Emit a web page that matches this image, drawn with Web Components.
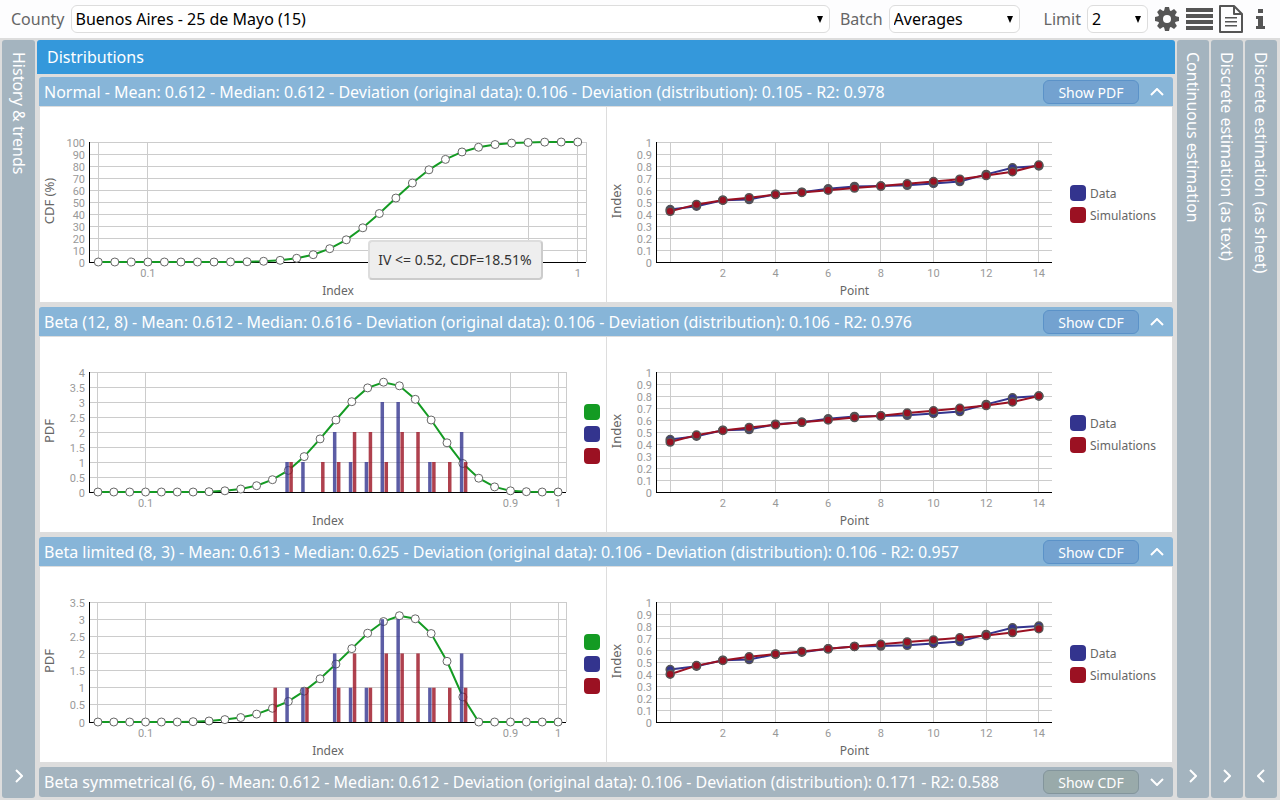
<!DOCTYPE html>
<html lang="en">
<head>
<meta charset="utf-8">
<title>Distributions</title>
<style>
  html, body { margin: 0; height: 100%; }
  body { font-family: "Noto Sans", "Open Sans", sans-serif; background: #ddd; }
</style>
</head>
<body>
<dist-app></dist-app>

<template id="t-app">
  <style>
    :host { display: flex; flex-direction: column; height: 100vh; min-width: 900px; overflow: hidden; }
    .panels { flex: 1; min-height: 0; display: flex; gap: 2px; padding: 2px 3px 2px 2px; }
    main { flex: 1; min-width: 0; display: flex; flex-direction: column; overflow: hidden; }
    h1 { margin: 0; padding: 0 10px; font-size: 16px; font-weight: 400; line-height: 34px; color: #fff; background: #3498db; border-radius: 3px 3px 0 0; }
    .list { display: flex; flex-direction: column; gap: 5px; padding: 3px 2px 0; }
    side-bar.wide { flex-basis: 33px; }
  </style>
  <tool-bar></tool-bar>
  <div class="panels">
    <side-bar class="wide">History &amp; trends</side-bar>
    <main>
      <h1>Distributions</h1>
      <div class="list">
        <dist-section action="Show PDF" open>
          <span slot="title">Normal - Mean: 0.612 - Median: 0.612 - Deviation (original data): 0.106 - Deviation (distribution): 0.105 - R2: 0.978</span>
          <data-chart data-set="normal"><chart-tip>IV &lt;= 0.52, CDF=18.51%</chart-tip></data-chart>
          <data-chart data-set="normalFit"></data-chart>
        </dist-section>
        <dist-section action="Show CDF" open>
          <span slot="title">Beta (12, 8) - Mean: 0.612 - Median: 0.616 - Deviation (original data): 0.106 - Deviation (distribution): 0.106 - R2: 0.976</span>
          <data-chart data-set="beta"></data-chart>
          <data-chart data-set="betaFit"></data-chart>
        </dist-section>
        <dist-section action="Show CDF" open>
          <span slot="title">Beta limited (8, 3) - Mean: 0.613 - Median: 0.625 - Deviation (original data): 0.106 - Deviation (distribution): 0.106 - R2: 0.957</span>
          <data-chart data-set="limited"></data-chart>
          <data-chart data-set="limitedFit"></data-chart>
        </dist-section>
        <dist-section action="Show CDF">
          <span slot="title">Beta symmetrical (6, 6) - Mean: 0.612 - Median: 0.612 - Deviation (original data): 0.106 - Deviation (distribution): 0.171 - R2: 0.588</span>
        </dist-section>
      </div>
    </main>
    <side-bar>Continuous estimation</side-bar>
    <side-bar>Discrete estimation (as text)</side-bar>
    <side-bar direction="left">Discrete estimation (as sheet)</side-bar>
  </div>
</template>

<template id="t-toolbar">
  <style>
    :host { display: flex; align-items: center; height: 38px; padding: 0 4px 0 11px; background: #fdfdfe; color: #666; box-sizing: border-box; }
    label { font-size: 16px; margin-right: 6px; }
    .pick { display: grid; align-items: center; }
    .pick > * { grid-area: 1 / 1; }
    .county { flex: 1; margin-right: 10px; }
    .batch { width: 131px; margin-right: 24px; }
    .limit { width: 61px; margin-right: 2px; }
    select { appearance: none; width: 100%; height: 28px; padding: 0 20px 0 4px; border: 1px solid #ddd; border-radius: 6px; background: #fff; color: #000; font: 16px "Noto Sans", sans-serif; }
    .arrow { justify-self: end; margin-right: 7px; pointer-events: none; }
    button { border: 0; padding: 0; background: none; width: 30px; height: 32px; display: grid; place-items: center; color: #555; }
    .big { width: 33px; }
  </style>
  <label for="county">County</label>
  <div class="pick county"><select id="county"><option>Buenos Aires - 25 de Mayo (15)</option></select><svg class="arrow" width="6" height="7"><path d="M0 0h6L3 7z"/></svg></div>
  <label for="batch">Batch</label>
  <div class="pick batch"><select id="batch"><option>Averages</option></select><svg class="arrow" width="6" height="7"><path d="M0 0h6L3 7z"/></svg></div>
  <label for="limit">Limit</label>
  <div class="pick limit"><select id="limit"><option>2</option></select><svg class="arrow" width="6" height="7"><path d="M0 0h6L3 7z"/></svg></div>
  <button class="big" aria-label="Settings"><svg width="24" height="24" viewBox="-12 -12 24 24"><g fill="currentColor"><circle r="9"/><path id="tooth" d="M-2-12h4l1 4v16l-1 4h-4l-1-4v-16z"/><use href="#tooth" transform="rotate(45)"/><use href="#tooth" transform="rotate(90)"/><use href="#tooth" transform="rotate(135)"/></g><circle r="4" fill="#fdfdfe"/></svg></button>
  <button class="big" aria-label="List"><svg width="27" height="22" viewBox="0 0 27 22"><path fill="currentColor" d="M0 0h27v4H0zM0 6h27v4H0zM0 12h27v4H0zM0 18h27v4H0z"/></svg></button>
  <button aria-label="Report"><svg width="24" height="28" viewBox="0 0 24 28"><path fill="none" stroke="currentColor" stroke-width="2" stroke-linejoin="round" d="M1 1h14l8 8v18H1zM15 1v8h8"/><path fill="currentColor" d="M6 12h12v1.500H6zM6 16h12v1.500H6zM6 20h12v1.500H6z"/></svg></button>
  <button aria-label="Information"><svg width="10" height="20" viewBox="0 0 10 20"><path fill="currentColor" d="M2 0h5v4H2zM0 7h7v10h2v3H0v-3h2v-7H0z"/></svg></button>
</template>

<template id="t-side">
  <style>
    :host { display: flex; flex: 0 0 32px; flex-direction: column; align-items: center; justify-content: space-between; background: #a4b4bf; color: #fff; border-radius: 3px; padding: 12px 0; box-sizing: border-box; }
    .name { writing-mode: vertical-rl; font-size: 16px; line-height: 22px; }
    button { border: 0; padding: 0; background: none; width: 20px; height: 20px; display: grid; place-items: center; }
    :host([direction="left"]) svg { transform: rotate(180deg); }
  </style>
  <span class="name"><slot></slot></span>
  <button aria-label="Toggle panel"><svg width="8" height="14" viewBox="0 0 8 14"><path d="M1 1l6 6-6 6" fill="none" stroke="#fff" stroke-width="2"/></svg></button>
</template>

<template id="t-section">
  <style>
    :host { display: block; }
    header { display: flex; align-items: center; height: 30px; padding: 1px 6px 0 5px; background: #a4b4bf; color: #fff; font-size: 16px; border-bottom: 1px solid transparent; border-radius: 3px; box-sizing: border-box; }
    :host([open]) header { background: #87b5d8; border-bottom-color: #ddd; border-radius: 3px 3px 0 0; }
    .title { flex: 1; min-width: 0; line-height: 26px; white-space: nowrap; overflow: hidden; }
    .action { flex: none; width: 96px; height: 24px; padding: 0; border: 1px solid #83959c; border-radius: 6px; background: #99aaaa; color: #fff; font: 14px "Noto Sans", sans-serif; }
    :host([open]) .action { border-color: #5b92c8; background: #73a2d0; }
    .toggle { width: 20px; height: 20px; margin-left: 8px; border: 0; padding: 0; background: none; display: grid; place-items: center; }
    :host([open]) .toggle svg { transform: rotate(180deg); }
    .body { display: none; grid-template-columns: 1fr 1fr; margin: 0 1px; }
    :host([open]) .body { display: grid; }
    ::slotted(data-chart:last-child) { border-left: 1px solid #ddd; }
  </style>
  <header>
    <span class="title"><slot name="title"></slot></span>
    <button class="action"></button>
    <button class="toggle" aria-label="Toggle section"><svg width="14" height="8" viewBox="0 0 14 8"><path d="M1 1l6 6 6-6" fill="none" stroke="#fff" stroke-width="2"/></svg></button>
  </header>
  <div class="body"><slot></slot></div>
</template>

<template id="t-chart">
  <style>
    :host { display: block; position: relative; height: 195px; min-width: 0; background: #fff; }
    svg { display: block; width: 100%; height: 100%; }
    .tick { font: 11px/1 Roboto, sans-serif; fill: #999; }
    .name { font-size: 12px; fill: #666; }
    .side { font-size: 13px; fill: #666; }
    .grid { stroke: #ccc; fill: none; shape-rendering: crispEdges; }
    .axis { stroke: #000; fill: none; shape-rendering: crispEdges; }
  </style>
  <svg role="img"></svg>
  <slot></slot>
</template>

<template id="t-tip">
  <style>
    :host { position: absolute; left: 58%; top: 133px; padding: 0 9px 0 8px; border: 2px solid #ccc; border-top-color: #ddd; border-left-color: #ddd; border-radius: 4px; background: #eee; color: #333; font-size: 14px; line-height: 36px; white-space: nowrap; }
  </style>
  <slot></slot>
</template>

<script>
const GREEN = "#149b23", BLUE = "#33348e", RED = "#9b1122";
const measured = [.437, .465, .515, .52, .565, .582, .61, .63, .633, .639, .655, .67, .73, .785, .8];
const step = (n, d, max) => Array.from({ length: n + 1 }, (_, i) => +(i * d).toFixed(1)).filter(v => v <= max);
const fit = simulated => ({
  max: 1, ticks: step(10, .1, 1), yName: "Index", xName: "Point", count: 15, right: 120,
  gridX: [0, 2, 4, 6, 8, 10, 12, 14],
  labels: { 2: "2", 4: "4", 6: "6", 8: "8", 10: "10", 12: "12", 14: "14" },
  lines: [{ color: BLUE, values: measured }, { color: RED, values: simulated }],
  legend: [[BLUE, "Data"], [RED, "Simulations"]]
});
const pdf = (max, values, blue, red) => ({
  max, ticks: step(8, .5, max), yName: "PDF", xName: "Index", count: 30, right: 40, frame: true,
  gridX: [0, 3, 26, 29], labels: { 3: "0.1", 26: "0.9", 29: "1" },
  lines: [{ color: GREEN, values, hollow: true }],
  bars: [[BLUE, -3, blue], [RED, 1, red]],
  legend: [[GREEN, ""], [BLUE, ""], [RED, ""]]
});
const SETS = {
  normal: {
    max: 100, ticks: step(10, 10, 100), yName: "CDF (%)", xName: "Index", count: 30, right: 20, frame: true,
    gridX: [0, 3, 26, 29], labels: { 3: "0.1", 29: "1" },
    lines: [{ color: GREEN, hollow: true, values: [0, 0, 0, 0, 0, 0, 0, 0, .1, .2, .6, 1.4, 3.1, 6.1, 11.1, 18.5, 28.5, 40.4, 53.3, 65.8, 76.8, 85.5, 91.7, 95.6, 97.9, 99.1, 99.6, 99.9, 100, 100] }]
  },
  normalFit: fit([.422, .48, .515, .536, .562, .58, .598, .616, .633, .652, .67, .69, .72, .752, .808]),
  beta: pdf(4, [0, 0, 0, 0, 0, 0, 0, .01, .04, .1, .21, .41, .72, 1.18, 1.77, 2.4, 3.01, 3.47, 3.66, 3.54, 3.09, 2.4, 1.64, .95, .46, .17, .04, .01, 0, 0],
    { 12: 1, 13: 1, 15: 2, 16: 1, 17: 1, 18: 3, 19: 3, 21: 1, 23: 2 },
    { 12: 1, 14: 1, 15: 1, 16: 2, 17: 2, 18: 1, 19: 2, 20: 2, 21: 1, 22: 1, 23: 1 }),
  betaFit: fit([.416, .474, .513, .538, .56, .581, .6, .62, .636, .658, .677, .698, .72, .75, .8]),
  limited: pdf(3.5, [0, 0, 0, 0, 0, 0, .01, .03, .07, .13, .23, .4, .6, .9, 1.26, 1.69, 2.14, 2.59, 2.93, 3.1, 3.01, 2.58, 1.77, .73, 0, 0, 0, 0, 0, 0],
    { 12: 1, 13: 1, 15: 2, 16: 1, 17: 1, 18: 3, 19: 3, 21: 1, 23: 2 },
    { 11: 1, 13: 1, 15: 1, 16: 2, 17: 1, 18: 2, 19: 2, 20: 2, 21: 1, 22: 1, 23: 1 }),
  limitedFit: fit([.398, .47, .513, .543, .566, .588, .61, .63, .647, .666, .684, .702, .72, .745, .777])
};

class Base extends HTMLElement {
  constructor() {
    super();
    this.attachShadow({ mode: "open" }).append(document.getElementById(this.constructor.template).content.cloneNode(true));
  }
}
class DistSection extends Base {
  static template = "t-section";
  connectedCallback() {
    this.shadowRoot.querySelector(".action").textContent = this.getAttribute("action");
    this.shadowRoot.querySelector(".toggle").onclick = () => this.toggleAttribute("open");
  }
}
class DataChart extends Base {
  static template = "t-chart";
  connectedCallback() {
    this.draw();
    new ResizeObserver(() => this.draw()).observe(this);
  }
  draw() {
    const c = SETS[this.dataset.set], width = this.clientWidth;
    if (!width) return;
    const left = 50, top = 35, bottom = 155, end = width - c.right, cell = (end - left) / c.count;
    const x = i => left + cell * (i + .5), y = v => bottom - v / c.max * (bottom - top);
    let s = "";
    for (const t of c.ticks) {
      const ty = Math.floor(y(t)) + .5;
      s += `<path class="grid" d="M${left} ${ty}H${end}"/><text class="tick" x="45" y="${ty + 4}" text-anchor="end">${t}</text>`;
    }
    for (const i of c.gridX) s += `<path class="grid" d="M${Math.floor(x(i)) + .5} ${top}V${bottom}"/>`;
    if (c.frame) s += `<path class="grid" d="M${Math.floor(end) + .5} ${top}V${bottom}"/>`;
    for (const i in c.labels) s += `<text class="tick" x="${x(+i)}" y="170" text-anchor="middle">${c.labels[i]}</text>`;
    s += `<path class="axis" d="M${left - .5} ${top}V${bottom + .5}H${end}"/>`;
    s += `<text class="name" x="${(left + end) / 2}" y="188" text-anchor="middle">${c.xName}</text>`;
    s += `<text class="side" transform="translate(14 94) rotate(-90)" text-anchor="middle">${c.yName}</text>`;
    for (const l of c.lines) {
      s += `<polyline fill="none" stroke="${l.color}" stroke-width="2" points="${l.values.map((v, i) => x(i) + "," + y(v)).join(" ")}"/>`;
      l.values.forEach((v, i) => {
        s += l.hollow
          ? `<circle cx="${x(i)}" cy="${y(v)}" r="4" fill="#fff" stroke="#666"/>`
          : `<circle cx="${x(i)}" cy="${y(v)}" r="4" fill="${l.color}" stroke="#555" stroke-width="1.5"/>`;
      });
    }
    for (const [color, dx, values] of c.bars || [])
      for (const i in values) {
        const by = y(values[i]);
        s += `<rect x="${x(+i) + dx}" y="${by}" width="3.500" height="${bottom - by}" fill="${color}" opacity=".8"/>`;
      }
    const items = c.legend || [];
    items.forEach(([color, name], i) => {
      const cy = 97 - items.length * 11 + i * 22 + 11;
      s += `<rect x="${end + 18}" y="${cy - 8}" width="16" height="16" rx="4" fill="${color}"/>`;
      if (name) s += `<text class="name" x="${end + 38}" y="${cy + 5}">${name}</text>`;
    });
    this.shadowRoot.querySelector("svg").innerHTML = s;
  }
}
customElements.define("chart-tip", class extends Base { static template = "t-tip"; });
customElements.define("side-bar", class extends Base { static template = "t-side"; });
customElements.define("tool-bar", class extends Base { static template = "t-toolbar"; });
customElements.define("data-chart", DataChart);
customElements.define("dist-section", DistSection);
customElements.define("dist-app", class extends Base { static template = "t-app"; });
</script>
</body>
</html>
